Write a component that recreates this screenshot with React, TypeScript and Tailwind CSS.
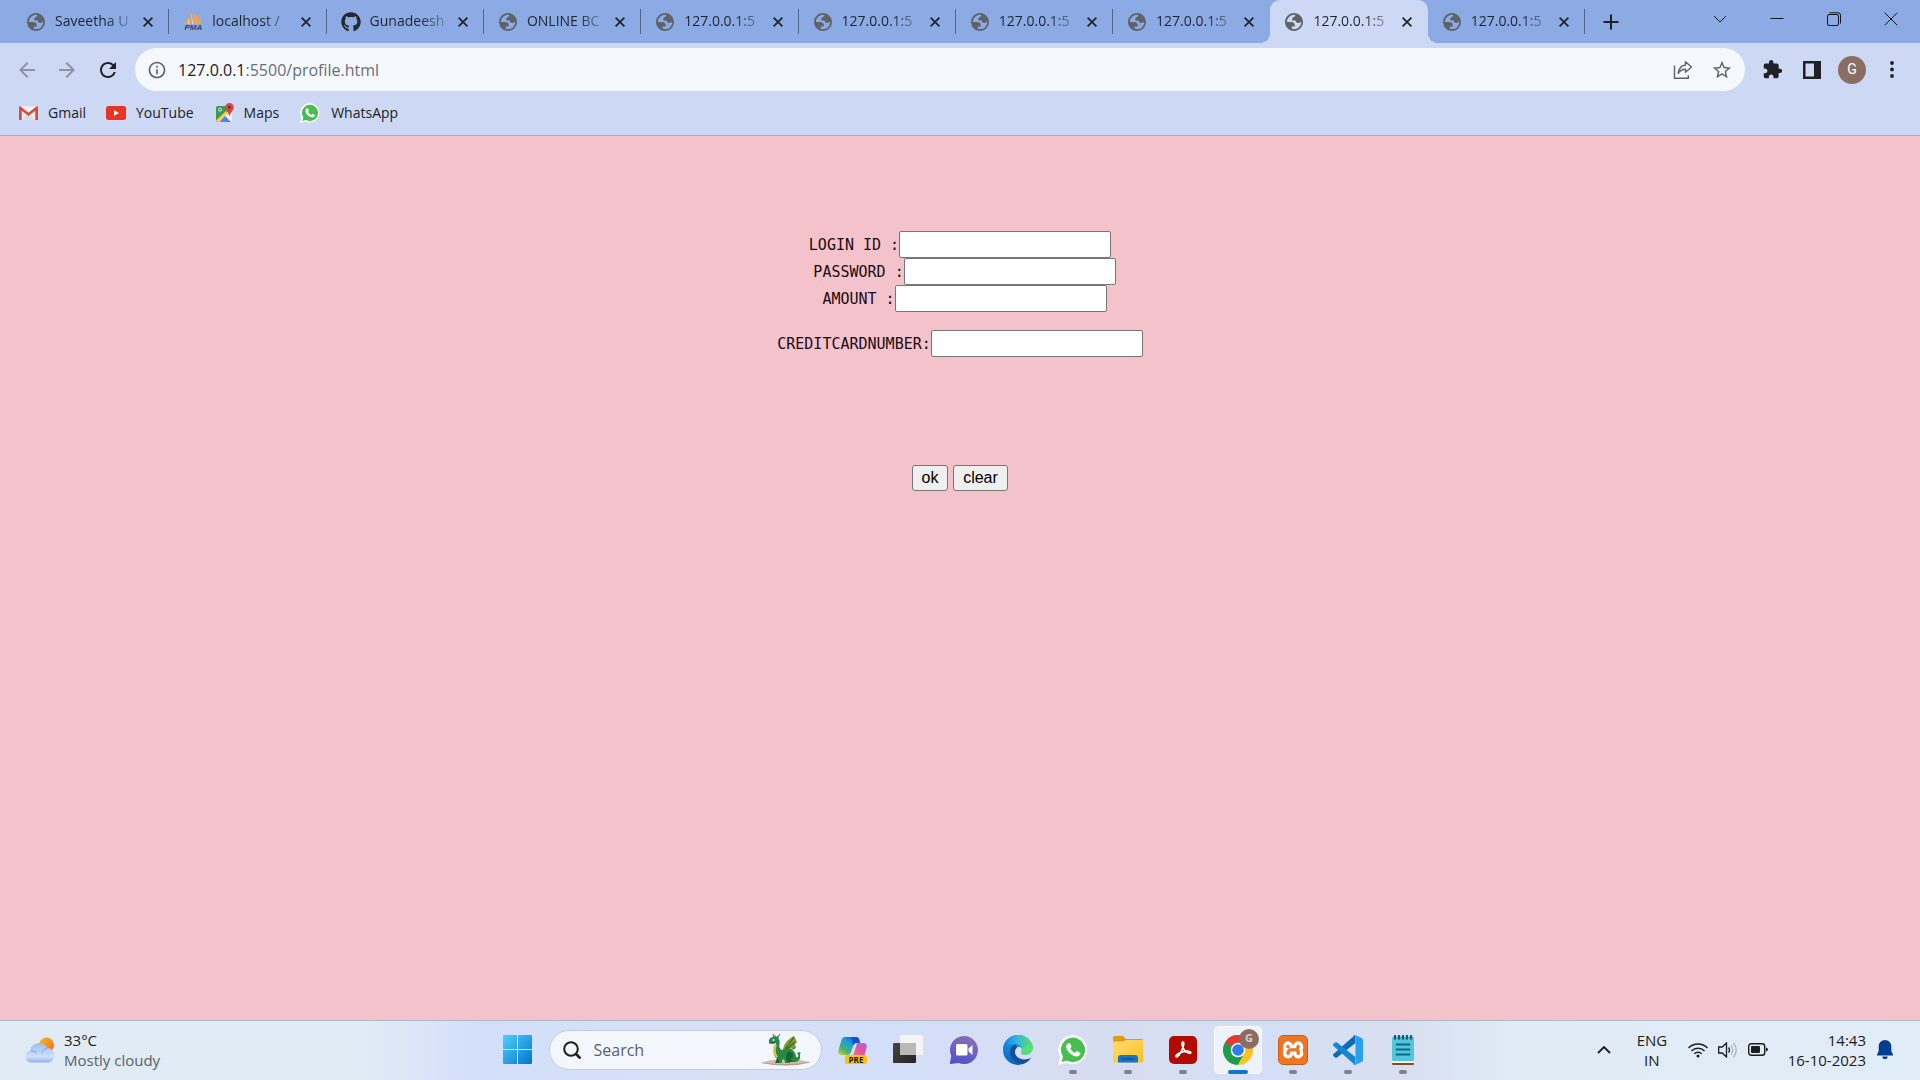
import React from "react";
import { FaGithub } from "react-icons/fa";
import { MdExtension, MdRefresh, MdStarBorder, MdArrowBack, MdArrowForward, MdInfoOutline } from "react-icons/md";
import { SiXampp } from "react-icons/si";

const UI_FONT = "font-['Open_Sans','Noto_Sans',sans-serif]";

function Globe() {
  return (
    <svg viewBox="2 2 20 20" className="size-[18px]" fill="#5f6368">
      <path
        fillRule="evenodd"
        d="M12 2C6.48 2 2 6.48 2 12s4.48 10 10 10 10-4.48 10-10S17.52 2 12 2zM4 12h4.4c3.407.022 4.922 1.73 4.543 5.127H9.488v2.47a8.004 8.004 0 0 0 10.498-8.08C19.327 12.507 18.332 13 17 13c-2.137 0-3.206-.916-3.206-2.75h-3.748c-.274-2.728.683-4.092 2.87-4.092 0-.975.327-1.597.811-1.97A8.004 8.004 0 0 0 4 12z"
      />
    </svg>
  );
}

function PmaIcon() {
  return (
    <span className="flex w-5 flex-col items-center">
      <svg viewBox="0 0 20 12" className="h-3 w-5">
        <path d="M8 0 8.6 12H3.5Q7 6 8 0zM5 4 3.8 12H1Q3.6 8 5 4zM10 1Q17 5 18.5 12H10z" fill="#f2a24a" />
        <path d="M8.4 0 10 12H9zM5.6 5l.6 7H5z" fill="#d9dde8" />
      </svg>
      <span className="font-['Liberation_Sans',sans-serif] text-[8px] leading-[7px] font-bold text-[#3c3f66] italic">PMA</span>
    </span>
  );
}

type Tab = { title: string; icon: "globe" | "pma" | "github"; active?: boolean; noDivider?: boolean };

const tabs: Tab[] = [
  { title: "Saveetha U", icon: "globe" },
  { title: "localhost /", icon: "pma" },
  { title: "Gunadeesh", icon: "github" },
  { title: "ONLINE BC", icon: "globe" },
  { title: "127.0.0.1:5", icon: "globe" },
  { title: "127.0.0.1:5", icon: "globe" },
  { title: "127.0.0.1:5", icon: "globe" },
  { title: "127.0.0.1:5", icon: "globe", noDivider: true },
  { title: "127.0.0.1:5", icon: "globe", active: true, noDivider: true },
  { title: "127.0.0.1:5", icon: "globe" },
];

function TabItem({ tab }: { tab: Tab }) {
  return (
    <div className={tab.active ? "relative flex h-full items-center rounded-t-[10px] bg-[#cdd9f4] pl-[15px]" : "relative flex h-full items-center pl-[15px]"}>
      {tab.active && (
        <>
          <span className="absolute bottom-0 -left-[10px] size-[10px] bg-[radial-gradient(circle_at_0_0,transparent_10px,#cdd9f4_10px)]" />
          <span className="absolute -right-[10px] bottom-0 size-[10px] bg-[radial-gradient(circle_at_100%_0,transparent_10px,#cdd9f4_10px)]" />
        </>
      )}
      <span className="flex w-[18px] shrink-0 justify-center">
        {tab.icon === "globe" && <Globe />}
        {tab.icon === "pma" && <PmaIcon />}
        {tab.icon === "github" && <FaGithub className="size-5 shrink-0 text-[#24292f]" />}
      </span>
      <button className="ml-[10px] min-w-0 flex-1 pb-[2px] text-left text-[14px] leading-5 whitespace-nowrap text-[#1f2430] [mask-image:linear-gradient(to_right,black_60%,transparent)]">
        {tab.title}
      </button>
      <button aria-label={"Close " + tab.title} className="mr-3 ml-px flex size-4 shrink-0 items-center justify-center text-[#202124]">
        <svg viewBox="0 0 10 10" className="size-[10px]" stroke="currentColor" strokeWidth="1.7"><path d="M.6.6l8.8 8.8M9.4.6.6 9.4" /></svg>
      </button>
      <span className={tab.noDivider ? "h-[25px] w-px" : "h-[25px] w-px bg-[#53658c]"} />
    </div>
  );
}

function TabStrip() {
  return (
    <div className="flex h-[43px] items-center justify-between bg-[#8cabe4] pl-3">
      <div className="flex h-full min-w-0 items-center">
        <div className="grid h-full w-[1573px] min-w-0 shrink grid-cols-10">
          {tabs.map((t, i) => <TabItem key={i} tab={t} />)}
        </div>
        <button aria-label="New tab" className="flex w-[52px] justify-center text-[#202124]">
          <svg viewBox="0 0 16 16" className="size-4" stroke="currentColor" strokeWidth="2"><path d="M8 .5v15M.5 8h15" /></svg>
        </button>
      </div>
      <div className="flex shrink-0 items-center self-start pt-3 text-[#14171d]">
        <button aria-label="Search tabs" className="flex w-[57px] justify-center">
          <svg viewBox="0 0 14 14" className="size-[14px]" fill="none" stroke="currentColor"><path d="M1 4l6 6 6-6" /></svg>
        </button>
        <button aria-label="Minimize" className="flex w-[57px] justify-center">
          <svg viewBox="0 0 14 14" className="size-[14px]" stroke="currentColor"><path d="M.5 6.5h13" /></svg>
        </button>
        <button aria-label="Restore" className="flex w-[57px] justify-center">
          <svg viewBox="0 0 14 14" className="size-[14px]" fill="none" stroke="currentColor"><rect x=".5" y="2.5" width="11" height="11" rx="1.5" /><path d="M2.5.8h8.5a2.3 2.3 0 0 1 2.500 2.300v8.500" /></svg>
        </button>
        <button aria-label="Close window" className="flex w-[58px] justify-center">
          <svg viewBox="0 0 14 14" className="size-[14px]" stroke="currentColor"><path d="M.7.7l12.600 12.600M13.300.7.7 13.300" /></svg>
        </button>
      </div>
    </div>
  );
}

function Toolbar() {
  return (
    <div className="flex h-[53px] items-center pl-[7px]">
      <button aria-label="Back" className="flex w-10 justify-center text-[#8b94a8]"><MdArrowBack className="size-6" /></button>
      <button aria-label="Forward" className="flex w-10 justify-center text-[#8b94a8]"><MdArrowForward className="size-6" /></button>
      <button aria-label="Reload" className="flex w-[42px] justify-center text-[#202124]"><MdRefresh className="size-6" /></button>
      <div className="ml-[6px] flex h-[43px] flex-1 items-center rounded-full bg-[#f5f8fd] pr-3 pl-3">
        <button aria-label="Site information" className="text-[#5f6368]"><MdInfoOutline className="size-5" /></button>
        <a href="#" className="ml-[11px] flex-1 text-[16px] leading-6 text-[#6a6e74]">
          <span className="text-[#202124]">127.0.0.1</span>:5500/profile.html
        </a>
        <button aria-label="Share" className="flex w-10 justify-center text-[#5f6368]">
          <svg viewBox="0 0 20 20" className="size-5" fill="none" stroke="currentColor" strokeWidth="1.400"><path d="M1.500 5.500v12.700h13.800v-3" /><path d="M12.500 1.800 18.500 7l-6 5.300V9.300Q8 9 5.200 13.500 6 6 12.500 5z" strokeLinejoin="round" /></svg>
        </button>
        <button aria-label="Bookmark this page" className="ml-2 flex w-[22px] justify-center text-[#5f6368]"><MdStarBorder className="size-[22px] shrink-0" /></button>
      </div>
      <button aria-label="Extensions" className="ml-[7px] flex w-10 justify-center text-[#202124]"><MdExtension className="size-[21px]" /></button>
      <button aria-label="Side panel" className="flex w-10 justify-center">
        <svg viewBox="0 0 18 18" className="size-[18px]"><path fillRule="evenodd" d="M0 0h18v18H0zM2.500 2.500v13h8.500v-13z" fill="#202124" /></svg>
      </button>
      <button aria-label="Profile" className="flex w-10 justify-center">
        <span className="flex size-7 items-center justify-center rounded-full bg-[#8a6e64] font-['Roboto',sans-serif] text-[14px] text-white">G</span>
      </button>
      <button aria-label="Menu" className="mr-2 flex w-10 justify-center">
        <svg viewBox="0 0 4 17" className="h-[17px] w-1" fill="#202124"><circle cx="2" cy="2" r="1.900" /><circle cx="2" cy="8.500" r="1.900" /><circle cx="2" cy="15" r="1.900" /></svg>
      </button>
    </div>
  );
}

function WhatsAppLogo({ className }: { className: string }) {
  return (
    <svg viewBox="0 0 30 30" className={className}>
      <path d="M15 .3A14.500 14.500 0 1 1 8.500 27.900L.2 30l2-8A14.500 14.500 0 0 1 15 .3z" fill="#fff" />
      <path d="M15 2.600A12.200 12.200 0 1 1 9 25.500L3.500 26.900 5 21.500A12.200 12.200 0 0 1 15 2.600z" fill="#45bf4f" />
      <path d="M10.200 8.200c.9-.5 1.600-.4 2 .4l1.200 2.700c.2.500-.3 1.300-1.100 2.100 1.200 2.100 2.700 3.500 5 4.400.8-1.200 1.400-1.700 1.900-1.500l2.700 1.300c.7.4.6 1.200.2 2-.9 1.700-2.700 2.300-4.600 1.800-4.700-1.300-7.800-4.200-9.200-8.300-.6-1.900 0-4 1.900-4.900z" fill="#fff" />
    </svg>
  );
}

function Bookmarks() {
  const link = "flex items-center text-[14px] leading-5 text-[#202124]";
  return (
    <nav aria-label="Bookmarks" className="flex h-10 items-center border-b border-[#a0adc9] pb-[5px] pl-[19px]">
      <a href="#" className={link}>
        <svg viewBox="0 0 19 14" className="mr-[10px] h-[14px] w-[19px]"><rect x="1" y=".5" width="17" height="13" fill="#f1f1f1" /><path d="M3 13.500 9.500 7l6.500 6.500z" fill="#dcdcdc" /><path d="M0 1.500Q0 .3 1.300.2l8.200 6.500L17.700.2Q19 .3 19 1.500V14h-2.700V4.700L9.500 10 2.700 4.700V14H0z" fill="#d64b3e" /></svg>
        Gmail
      </a>
      <a href="#" className={link + " ml-[20px]"}>
        <svg viewBox="0 0 20 14" className="mr-[10px] h-[14px] w-5"><rect width="20" height="14" rx="2.500" fill="#e93323" /><path d="M8 4.200 13 7l-5 2.800z" fill="#fff" /></svg>
        YouTube
      </a>
      <a href="#" className={link + " ml-[21px]"}>
        <svg viewBox="0 0 20 20" className="mr-[9px] size-5">
          <rect x="1" y="3" width="16" height="16" rx="1.500" fill="#e8eaed" />
          <path d="M1 4.500Q1 3 2.500 3H12l1 5-11 11Q1 18.500 1 17.500z" fill="#3c9a5c" />
          <path d="M1 17.500 11 8l2 2-9 9H2z" fill="#f7d04a" />
          <path d="M4.500 19 10 13l6 6z" fill="#4a86e8" /><path d="M12.500 11.500 17 16v2l-6-5.500z" fill="#f4f4f4" />
          <circle cx="5" cy="6.700" r="1.500" fill="none" stroke="#d9ecdf" />
          <path d="M14.500 0A4.300 4.300 0 0 1 18.800 4.300C18.800 8 15.300 9 14.500 13.500 13.700 9 10.200 8 10.200 4.300A4.300 4.300 0 0 1 14.500 0z" fill="#d6493c" /><circle cx="14.500" cy="4.200" r="1.500" fill="#722a27" />
        </svg>
        Maps
      </a>
      <a href="#" className={link + " ml-[21px]"}>
        <WhatsAppLogo className="mr-[11px] size-5" />
        WhatsApp
      </a>
    </nav>
  );
}

function Field({ id, label, type = "text" }: { id: string; label: string; type?: string }) {
  return (
    <div className="flex items-center justify-center">
      <label htmlFor={id} className="text-[15px] leading-5 whitespace-pre text-[#1a0c10]">{label}</label>
      <input id={id} type={type} className="h-[27px] w-[212px] rounded-[2px] border border-[#767676] bg-white px-1" />
    </div>
  );
}

function ProfilePage() {
  const btn = "h-[26px] rounded-[3px] border border-[#767676] bg-[#efefef] text-[16px] leading-5 text-black";
  return (
    <main className="flex-1 bg-[#f4c2cb] pt-[95px] font-['Liberation_Sans',sans-serif]">
      <form>
        <div className="font-['DejaVu_Sans_Mono',monospace]">
          <Field id="login" label="LOGIN ID :" />
          <Field id="password" label=" PASSWORD :" type="password" />
          <Field id="amount" label=" AMOUNT :" />
          <div className="mt-[18px]"><Field id="card" label="CREDITCARDNUMBER:" /></div>
        </div>
        <div className="mt-[108px] flex justify-center gap-[5px]">
          <button type="button" className={btn + " w-9"}>ok</button>
          <button type="reset" className={btn + " w-[55px]"}>clear</button>
        </div>
      </form>
    </main>
  );
}

function StartIcon() {
  return (
    <svg viewBox="0 0 29 29" className="size-[29px]">
      <defs><linearGradient id="win" x1="0" y1="0" x2="1" y2="1" gradientUnits="objectBoundingBox"><stop stopColor="#4fd0fb" /><stop offset="1" stopColor="#0473d0" /></linearGradient></defs>
      <path d="M1 0h13v14H0V1a1 1 0 0 1 1-1zM15 0h13a1 1 0 0 1 1 1v13H15zM0 15h14v14H1a1 1 0 0 1-1-1zM15 15h14v13a1 1 0 0 1-1 1H15z" fill="url(#win)" />
    </svg>
  );
}

function Dragon() {
  return (
    <svg viewBox="0 0 50 32" className="h-8 w-[50px]">
      <path d="M0 29Q12 25 25 25.500T50 28.500Q38 31.500 25 31.500T0 29z" fill="#b59a8a" />
      <path d="M1 28.500Q12 25 25 25.300T49 28Q38 30 25 30T1 28.500z" fill="#d0bdaf" />
      <path d="M22 15Q24 6 33 2l3 6-2 2 1 4-5 0-1 4-5 1z" fill="#7e9a36" />
      <path d="M24 16 33 3M25 16l9-8M26 17l8-3" stroke="#3f6b26" strokeWidth="1.200" />
      <path d="M8 6q1-3 5-3.500l1-2 1 2.500 3-2-.5 3.500q2 2.500 1 6-1 3 2 5.500 6-3 11 0Q35 19 35 23q3 1 2-3l-1.500-1 4-1-.5 3q1 6-5 7h-5v1h-5v-1l-1-3-2 1v3h-6v-2l1-2q-5-4-2-11l1-5-4 .500Q7 9.500 8 6z" fill="#258b42" />
      <path d="M13 11Q10 20 16 24l1-1Q13 17 16 11z" fill="#e8bd45" />
      <path d="M26 18q5-1 6 3 0 3-3 4l4 3h-6l-2-2zM17 23l1 6h-4z" fill="#176331" />
      <circle cx="12.500" cy="6" r="1" fill="#fff" /><path d="M8 9h6" stroke="#125c2c" />
      <path d="m13 3-1-3M17 3l2-3" stroke="#8878a0" strokeWidth="1.300" />
    </svg>
  );
}

function Copilot() {
  return (
    <svg viewBox="0 0 30 29" className="h-[29px] w-[30px]">
      <defs>
        <linearGradient id="cpa" x1="0" y1="1" x2=".8" y2="0"><stop stopColor="#e5cf35" /><stop offset=".3" stopColor="#4cb36a" /><stop offset=".65" stopColor="#1a9fe0" /><stop offset="1" stopColor="#1a52d0" /></linearGradient>
        <linearGradient id="cpb" x1="1" y1="0" x2="0" y2="1"><stop stopColor="#b35ae8" /><stop offset=".5" stopColor="#e4559b" /><stop offset="1" stopColor="#fb8a53" /></linearGradient>
      </defs>
      <path d="M7 2h11q2.500 0 3.300 3L22 8h-4q-2 0-3 3l-2 6q-1 3-4 3H4q-5 0-3.500-5L3.500 5Q4.500 2 7 2z" fill="url(#cpa)" />
      <path d="M14 2h4q2.500 0 3.300 3L22 8h-4q-2 0-3 3z" fill="#1b4ecb" />
      <path d="M19 8h6q5 0 3.500 5l-2 7q-1 2-3 2H13q2-1 3-4l2.500-8z" fill="url(#cpb)" />
      <rect x="7" y="20" width="22" height="9" rx="2" fill="#fdc20c" />
      <text x="18" y="27.500" textAnchor="middle" fontSize="8" fontWeight="700" fontFamily="Open Sans, sans-serif" fill="#1b1500">PRE</text>
    </svg>
  );
}

function TaskView() {
  return (
    <svg viewBox="0 0 30 29" className="h-[29px] w-[30px]">
      <defs><linearGradient id="tva" x1="0" y1="0" x2="1" y2="1"><stop stopColor="#454545" /><stop offset="1" stopColor="#242424" /></linearGradient></defs>
      <rect y="8" width="23" height="20" rx="1" fill="url(#tva)" />
      <rect x="7" y="0" width="23" height="20" rx="1" fill="#f4f4f4" />
      <path d="M7 8h16v12H8q-1 0-1-1z" fill="#b9b9ba" />
    </svg>
  );
}

function Chat() {
  return (
    <svg viewBox="0 0 29 28" className="h-7 w-[29px]">
      <defs><linearGradient id="cha" x1=".8" y1="0" x2=".4" y2="1"><stop stopColor="#8f6fae" /><stop offset=".5" stopColor="#6a63c4" /><stop offset="1" stopColor="#5554c9" /></linearGradient></defs>
      <path d="M15 0a14 14 0 1 1-5.500 26.900L2 28q-1.500 0-1-1.500L2.300 20A14 14 0 0 1 15 0z" fill="url(#cha)" />
      <rect x="7" y="8" width="11.500" height="11.500" rx="1.500" fill="#fff" /><path d="M19.500 12.500 23.500 9v10l-4-3.500z" fill="#fff" />
    </svg>
  );
}

function Edge() {
  return (
    <svg viewBox="0 0 30 30" className="size-[30px]">
      <defs>
        <linearGradient id="eda" x1="0" y1=".5" x2="1" y2=".5"><stop stopColor="#0c78d4" /><stop offset=".45" stopColor="#2fb6e6" /><stop offset="1" stopColor="#62e35c" /></linearGradient>
        <linearGradient id="edb" x1="0" y1="0" x2="0" y2="1"><stop stopColor="#1a9be8" /><stop offset="1" stopColor="#0a62c0" /></linearGradient>
      </defs>
      <circle cx="15" cy="15" r="15" fill="url(#edb)" />
      <path d="M0 15C0 7 6.500 0 15 0c9 0 15 6.500 15 12.500 0 4.500-3.300 7.200-7 7.200-3 0-5-1-5-2 0-.8 1-1 1-3 0-3-3-5.700-7-5.700-6 0-11 2-12 6z" fill="url(#eda)" />
      <path d="M12 9.500c-5 2-6.500 8-3.500 13C12 28 18 30 22 28q4-2 6-5.500-8 4-13-.5c-3-2.800-3-6.500-.500-9.500z" fill="#124f9b" />
      <path d="M14.500 12c-3.500 3-3.300 7.500.2 10.300 4 3 9 2.500 13.300.4l2-3V13q-1 6.600-7 6.700c-3 0-5-1-5-2 0-.8 1-1 1-3 0-1.500-2-3.500-4.500-2.700z" fill="#d6def3" />
      <path d="M30 12.500q-1 7.100-7 7.200 3 .800 7 0z" fill="#d6def3" />
      <path d="M19 14c.5 2-1 2.800-1 3.700 0 1 2 2 5 2 3.700 0 7-2.700 7-7.200l-5-3z" fill="#58dc7c" />
    </svg>
  );
}

function Folder() {
  return (
    <svg viewBox="0 0 30 27" className="h-[27px] w-[30px]">
      <defs><linearGradient id="foa" x1="0" y1="0" x2="1" y2="1"><stop stopColor="#ffdd72" /><stop offset="1" stopColor="#fdbe24" /></linearGradient></defs>
      <path d="M0 1.500Q0 0 1.500 0H9q1.500 0 2.500 1.500L13 3h15.500Q30 3 30 4.500V10H0z" fill="#dd9d0c" />
      <path d="M0 5.500h10L13.500 4H30v21q0 1.500-1.500 1.500h-27Q0 26.500 0 25z" fill="url(#foa)" />
      <path d="M5 26.500V22q0-3 3-3h14q3 0 3 3v4.500z" fill="#1476c8" /><path d="M9 22.800h12" stroke="#0b4f94" strokeWidth="1.200" strokeLinecap="round" />
    </svg>
  );
}

function Acrobat() {
  return (
    <svg viewBox="0 0 28 28" className="size-7">
      <rect width="28" height="28" rx="5" fill="#b30b00" />
      <path d="M7 20.500c-.8-1.500 3-3.800 7.500-4.800 3.500-.8 7.300-.7 7.300.8 0 2.200-5-.2-7-3.300C12.900 10.300 12.500 6 13.900 6c1.600 0 .8 4-1.100 8.300C10.900 18.500 8 22 7 20.500z" fill="none" stroke="#fff" strokeWidth="1.700" />
    </svg>
  );
}

function Chrome() {
  return (
    <svg viewBox="0 0 30 30" className="size-[30px]">
      <path d="M15 15 2 7.500A15 15 0 0 1 28 7.500z" fill="#e33b2e" />
      <path d="M2 7.500A15 15 0 0 0 15 30l6.500-11.200L15 15z" fill="#1e9b4b" />
      <path d="M28 7.500H15l6.500 11.300L15 30A15 15 0 0 0 28 7.500z" fill="#fcc31e" />
      <path d="M2 7.500 8.500 18.800 15 15V7.500z" fill="#1e9b4b" /><path d="M2 7.500A15 15 0 0 1 15 0l3 7.500h-3L8 13z" fill="#e33b2e" />
      <path d="M2 7.500 8.500 18.800 10 12z" fill="#1e9b4b" />
      <circle cx="15" cy="15" r="7.300" fill="#fff" /><circle cx="15" cy="15" r="5.800" fill="#2f7cf0" />
    </svg>
  );
}

function Xampp() {
  return (
    <span className="flex size-[30px] items-center justify-center rounded-[5px] border border-[#c95c1c] bg-[radial-gradient(closest-side,white_80%,#ee7623_82%)]">
      <SiXampp className="size-7 shrink-0 text-[#ee7623]" />
    </span>
  );
}

function VsCode() {
  return (
    <svg viewBox="0 0 30 30" className="size-[30px]">
      <path d="M22 0 22.500 8 4 22.500q-1 .7-2-.1L.5 21q-1-1 0-2z" fill="#0a6db8" />
      <path d="M22 30 22.500 22 4 7.500q-1-.7-2 .1L.5 9q-1 1 0 2z" fill="#1686cf" />
      <path d="M22 0 29 3.200Q30 3.800 30 5v20q0 1.200-1 1.800L22 30q-1.500.3-2-.5 2 .5 2.500-1.500V2Q22 0 20 .5q.5-.8 2-.5z" fill="#27a0ee" />
    </svg>
  );
}

function Notepad() {
  return (
    <svg viewBox="0 0 22 30" className="h-[30px] w-[22px]">
      <rect y="26" width="22" height="4" rx="1" fill="#8a4b1c" /><rect y="24" width="22" height="4" fill="#f2f2f2" />
      <rect y="2" width="22" height="24" rx="1.500" fill="#56c5dc" />
      <path d="M3 1v2.500M7 1v2.500M11 1v2.500M15 1v2.500M19 1v2.500" stroke="#0b6178" strokeWidth="2.400" strokeLinecap="round" />
      <path d="M4.500 9.500h13M4.500 14.500h13M4.500 19.500h13" stroke="#0b6a85" strokeWidth="1.800" strokeLinecap="round" />
    </svg>
  );
}

function ChromeSlot() {
  return (
    <span className="relative flex size-12 items-center justify-center rounded-[5px] border border-white/70 bg-white/60">
      <Chrome />
      <span className="absolute top-[2px] right-[2px] flex size-5 items-center justify-center rounded-full bg-[#8a6e64] text-[11px] font-bold text-[#ddd0cb]">G</span>
    </span>
  );
}

const apps: { name: string; icon: React.ReactNode; mark?: "idle" | "active" }[] = [
  { name: "Copilot", icon: <Copilot /> },
  { name: "Task view", icon: <TaskView /> },
  { name: "Chat", icon: <Chat /> },
  { name: "Microsoft Edge", icon: <Edge /> },
  { name: "WhatsApp", icon: <WhatsAppLogo className="size-[30px]" />, mark: "idle" },
  { name: "File Explorer", icon: <Folder />, mark: "idle" },
  { name: "Adobe Acrobat", icon: <Acrobat />, mark: "idle" },
  { name: "Google Chrome", icon: <ChromeSlot />, mark: "active" },
  { name: "XAMPP", icon: <Xampp />, mark: "idle" },
  { name: "Visual Studio Code", icon: <VsCode />, mark: "idle" },
  { name: "Notepad", icon: <Notepad />, mark: "idle" },
];

function Taskbar() {
  return (
    <footer className="grid h-[60px] grid-cols-[1fr_auto_1fr] items-center border-t border-[#b0b8c8] bg-[linear-gradient(to_right,#e0ebf5_0%,#e0ebf6_19%,#d3dffa_25%,#d8e0f5_38%,#d3dff9_46%,#d7ddf0_58%,#d4dff7_66%,#d8dff0_73%,#e0ebf6_79%,#e0ecf7_100%)] pb-[2px]">
      <button className="flex items-center justify-self-start pl-[25px] text-left text-[15px] leading-5">
        <svg viewBox="0 0 30 26" className="mr-[9px] h-[26px] w-[30px]">
          <defs>
            <linearGradient id="sun" x1="0" y1="0" x2="1" y2="1"><stop stopColor="#f8bb2c" /><stop offset="1" stopColor="#ee6a1c" /></linearGradient>
            <linearGradient id="cl" x1="0" y1="0" x2="0" y2="1"><stop stopColor="#9dbdf2" /><stop offset=".7" stopColor="#cfe0fa" /><stop offset="1" stopColor="#8fb0ee" /></linearGradient>
          </defs>
          <circle cx="21.500" cy="8" r="7.500" fill="url(#sun)" />
          <path d="M6 25.500a6 6 0 0 1-1-11.800A9.500 9.500 0 0 1 22.500 11a7.400 7.400 0 0 1 1.500 14.500z" fill="url(#cl)" />
          <path d="M5 14q4-.5 7 1.500M16.500 16q2-4.500 6-5" fill="none" stroke="#86a6e8" />
        </svg>
        <span><span className="block text-[#1b1d20]">33°C</span><span className="block text-[#5a6068]">Mostly cloudy</span></span>
      </button>
      <div className="flex h-full items-center">
        <button aria-label="Start" className="flex w-[55px] justify-center"><StartIcon /></button>
        <div className="mx-1 flex h-10 w-[273px] items-center rounded-full border border-[#c3cbe0] bg-[#f3f6fd] pr-[10px] pl-[13px]">
          <svg viewBox="0 0 18 18" className="size-[18px] shrink-0" fill="none" stroke="#1f1f1f" strokeWidth="2"><circle cx="8" cy="8" r="6.800" /><path d="m12.500 12.500 5 5" strokeWidth="2.600" /></svg>
          <input aria-label="Search" placeholder="Search" className="ml-[13px] min-w-0 flex-1 text-[16px] leading-6 outline-none placeholder:text-[#5c5f66]" />
          <Dragon />
        </div>
        {apps.map((a) => (
          <button key={a.name} aria-label={a.name} className="relative flex h-full w-[55px] items-center justify-center">
            {a.icon}
            {a.mark === "idle" && <span className="absolute bottom-1 h-1 w-2 rounded-full bg-[#7d828c]" />}
            {a.mark === "active" && <span className="absolute bottom-1 h-1 w-5 rounded-full bg-[#0a78d4]" />}
          </button>
        ))}
      </div>
      <div className="flex items-center justify-self-end pr-[27px] text-[15px] leading-5 text-[#1b1d20]">
        <button aria-label="Show hidden icons" className="mr-[26px]">
          <svg viewBox="0 0 14 8" className="h-2 w-[14px]" fill="none" stroke="currentColor" strokeWidth="1.800"><path d="m1 7 6-6 6 6" /></svg>
        </button>
        <button className="mr-[21px] w-[30px] text-center">ENG<br />IN</button>
        <button aria-label="Network, sound and battery" className="mr-5 flex items-center gap-[10px]">
          <svg viewBox="0 0 20 16" className="h-4 w-5" fill="none" stroke="currentColor" strokeWidth="1.500"><path d="M.6 6a13.300 13.300 0 0 1 18.800 0M3.500 9a9.200 9.200 0 0 1 13 0M6.300 11.800a5.200 5.200 0 0 1 7.400 0" /><circle cx="10" cy="14" r="1.500" fill="currentColor" stroke="none" /></svg>
          <svg viewBox="0 0 20 16" className="h-4 w-5" fill="none" stroke="currentColor" strokeWidth="1.300"><path d="M.7 5v6h3.500L8.500 15V1L4.200 5zM10.500 5.500q2 2.500 0 5" /><path d="M13 3.500q3.500 4.500 0 9M15.500 1q5.500 7 0 14" stroke="#aeb5bf" /></svg>
          <svg viewBox="0 0 20 13" className="h-[13px] w-5"><rect x=".7" y=".7" width="16" height="11.600" rx="2.500" fill="none" stroke="currentColor" strokeWidth="1.400" /><rect x="3" y="3" width="9" height="7" rx="1" fill="currentColor" /><path d="M18 4.500q2 .5 2 2t-2 2z" fill="currentColor" /></svg>
        </button>
        <button className="mr-[11px] text-right">14:43<br />16-10-2023</button>
        <button aria-label="Notifications">
          <svg viewBox="0 0 16 19" className="h-[19px] w-4" fill="#003e92"><path d="M8 0a6.300 6.300 0 0 1 6.300 6.300v5L16 14.500v1H0v-1l1.700-3.200v-5A6.300 6.300 0 0 1 8 0zM5.300 16.500h5.400a2.700 2.700 0 0 1-5.400 0z" /></svg>
        </button>
      </div>
    </footer>
  );
}

export default function App() {
  return (
    <div className={"flex min-h-screen flex-col " + UI_FONT}>
      <header className="bg-[#cdd9f4]">
        <TabStrip />
        <Toolbar />
        <Bookmarks />
      </header>
      <ProfilePage />
      <Taskbar />
    </div>
  );
}
